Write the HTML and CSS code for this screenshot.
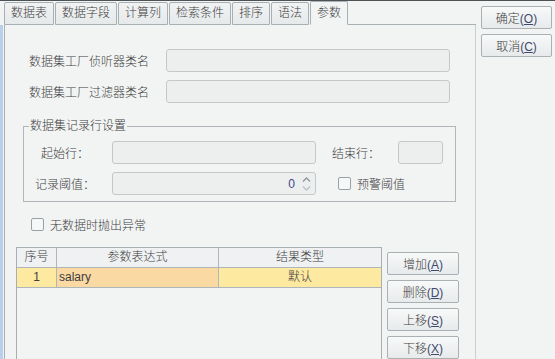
FILE: index.html
```html
<html>
	<head>
		<meta charset="utf-8">
		<title>参数</title>
		<link rel="stylesheet" href="styles.css">
	</head>
	<body>
		<div class="window">
			<div class="left">
				<div class="tabs">
					<div class="tab">数据表</div>
					<div class="tab">数据字段</div>
					<div class="tab">计算列</div>
					<div class="tab">检索条件</div>
					<div class="tab">排序</div>
					<div class="tab">语法</div>
					<div class="tab selected">参数</div>
					<div class="tabfill"></div>
				</div>
				<div class="stage">
					<div class="edge"></div>
					<div class="panel">
						<div class="row">
							<span class="lbl">数据集工厂侦听器类名</span>
							<div class="field wide"></div>
						</div>
						<div class="row">
							<span class="lbl">数据集工厂过滤器类名</span>
							<div class="field wide"></div>
						</div>

						<fieldset class="group">
							<legend>数据集记录行设置</legend>
							<div class="grow">
								<span class="glbl">起始行：</span>
								<div class="field mid"></div>
								<span class="elbl">结束行：</span>
								<div class="field small"></div>
							</div>
							<div class="grow">
								<span class="glbl">记录阈值：</span>
								<div class="field mid spin">
									<span class="num">0</span>
									<svg class="arrows" width="9" height="16" viewBox="0 0 9 16">
										<path d="M1 5.5 L4.5 2 L8 5.5" fill="none" stroke="#8d979c" stroke-width="1.3"/>
										<path d="M1 10.5 L4.5 14 L8 10.5" fill="none" stroke="#b9c1c5" stroke-width="1.3"/>
									</svg>
								</div>
								<label class="check warn"><span class="box"></span>预警阈值</label>
							</div>
						</fieldset>

						<label class="check nodata"><span class="box"></span>无数据时抛出异常</label>

						<div class="lower">
							<div class="grid">
								<div class="gr head">
									<div class="c">序号</div>
									<div class="c">参数表达式</div>
									<div class="c">结果类型</div>
								</div>
								<div class="gr sel">
									<div class="c">1</div>
									<div class="c expr">salary</div>
									<div class="c">默认</div>
								</div>
							</div>
							<div class="btncol">
								<button>增加<span class="mn">(<u>A</u>)</span></button>
								<button>删除<span class="mn">(<u>D</u>)</span></button>
								<button>上移<span class="mn">(<u>S</u>)</span></button>
								<button>下移<span class="mn">(<u>X</u>)</span></button>
							</div>
						</div>
					</div>
				</div>
			</div>
			<div class="right">
				<button class="wide-btn">确定<span class="mn">(<u>O</u>)</span></button>
				<button class="wide-btn">取消<span class="mn">(<u>C</u>)</span></button>
			</div>
		</div>
	</body>
</html>
```

FILE: styles.css
```css
* {
	box-sizing: border-box;
}
body {
	margin: 0;
	background: #f2f4f4;
	color: #404040;
	font-family: "Liberation Sans", "Noto Sans CJK SC", sans-serif;
	font-size: 12px;
	font-weight: 300;
	overflow: hidden;
}
.window {
	display: flex;
	height: 359px;
	border-top: 1px solid #4e5254;
}
.left {
	width: 476px;
	display: flex;
	flex-direction: column;
}
.tabs {
	display: flex;
	align-items: flex-end;
	height: 26px;
	margin-left: 4px;
}
.tab {
	height: 23px;
	line-height: 21px;
	padding: 0 6px;
	margin-right: 1px;
	border: 1px solid #a9b0b4;
	border-radius: 2px 2px 0 0;
	background: linear-gradient(#f1f3f3, #e6e9ea);
	white-space: nowrap;
}
.tab.selected {
	height: 24px;
	line-height: 22px;
	background: #f2f4f4;
	border-bottom-color: #f2f4f4;
	margin-right: 0;
}
.tabfill {
	flex: 1;
	border-bottom: 1px solid #a9b0b4;
	border-right: 1px solid #a9b0b4;
	height: 1px;
}
.stage {
	flex: 1;
	display: flex;
}
.edge {
	width: 4px;
	border-left: 3px solid #b9d0ec;
}
.panel {
	width: 472px;
	border-left: 1px solid #a9b0b4;
	border-right: 1px solid #c9cfd1;
	padding-top: 24px;
	display: flex;
	flex-direction: column;
}
.row {
	display: flex;
	align-items: center;
	height: 23px;
	margin-bottom: 8px;
	padding-left: 24px;
}
.lbl {
	width: 137px;
}
.field {
	height: 23px;
	background: #edefef;
	border: 1px solid #c3c9cb;
	border-radius: 3px;
}
.field.wide {
	width: 284px;
}
.field.mid {
	width: 204px;
}
.field.small {
	width: 45px;
}
.group {
	margin: 8px 0 0 18px;
	width: 433px;
	padding: 8px 0 6px 0;
	border: 1px solid #b0b6b9;
	border-radius: 0;
}
.group legend {
	margin-left: 5px;
	padding: 0 1px;
	line-height: 14px;
}
.grow {
	display: flex;
	align-items: center;
	height: 23px;
}
.grow + .grow {
	margin-top: 8px;
}
.glbl {
	width: 82px;
	margin-right: 6px;
	text-align: center;
}
.elbl {
	width: 66px;
	margin-left: 16px;
}
.spin {
	display: flex;
	align-items: center;
	justify-content: flex-end;
	padding-right: 4px;
}
.num {
	color: #3a4a8a;
	margin-right: 7px;
}
.check {
	display: flex;
	align-items: center;
}
.box {
	width: 13px;
	height: 13px;
	border: 1px solid #98a1a5;
	border-radius: 2px;
	background: #f6f7f7;
	margin-right: 6px;
}
.warn {
	margin-left: 22px;
}
.nodata {
	margin: 16px 0 0 26px;
	height: 13px;
}
.lower {
	flex: 1;
	display: flex;
	margin: 16px 0 0 11px;
}
.grid {
	width: 366px;
	border: 1px solid #a7afb3;
	border-bottom: none;
}
.gr {
	display: grid;
	grid-template-columns: 40px 162px 162px;
	height: 20px;
	border-bottom: 1px solid #aeb6ba;
}
.c {
	line-height: 19px;
	text-align: center;
	border-right: 1px solid #aeb6ba;
	white-space: nowrap;
}
.c:last-child {
	border-right: none;
}
.head {
	background: #eff1f2;
}
.sel .c {
	background: #fde9a0;
}
.sel .expr {
	background: #fbd9a3;
	text-align: left;
	padding-left: 2px;
}
.btncol {
	display: flex;
	flex-direction: column;
	gap: 5px;
	padding: 5px 0 0 5px;
}
button {
	font-family: "Liberation Sans", "Noto Sans CJK SC", sans-serif;
	font-size: 12px;
	font-weight: 300;
	color: #404040;
	width: 72px;
	height: 23px;
	padding: 0;
	border: 1px solid #a9b1b5;
	border-radius: 2px;
	background: linear-gradient(#f8f9f9, #e7eaeb);
}
.mn {
	color: #3f4a6e;
}
.right {
	flex: 1;
	display: flex;
	flex-direction: column;
	gap: 5px;
	padding: 5px 0 0 5px;
}
.wide-btn {
	width: 71px;
}
```
